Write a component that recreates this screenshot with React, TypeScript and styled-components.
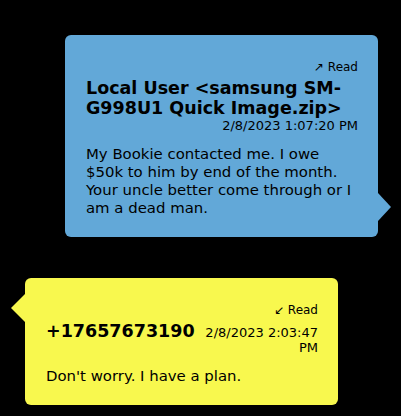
import React from "react";
import styled, { createGlobalStyle, css } from "styled-components";

const Global = createGlobalStyle`
  html, body { margin: 0; padding: 0; background: #000; }
  body { font-family: "DejaVu Sans", Verdana, sans-serif; }
`;

const Thread = styled.div`
  display: flex;
  flex-direction: column;
  gap: 41px;
  padding: 35px 23px 12px 25px;
  min-height: 416px;
  box-sizing: border-box;
  background: #000;
`;

type Side = "out" | "in";

const Bubble = styled.div<{ $side: Side }>`
  position: relative;
  width: 313px;
  box-sizing: border-box;
  border-radius: 6px;
  padding: 25px 20px 20px 21px;
  color: #000;
  align-self: ${(p) => (p.$side === "out" ? "flex-end" : "flex-start")};
  background: ${(p) => (p.$side === "out" ? "#62a8d8" : "#f8f84e")};
  &::after {
    content: "";
    position: absolute;
    width: 0;
    height: 0;
    border-top: 14px solid transparent;
    border-bottom: 14px solid transparent;
    ${(p) =>
      p.$side === "out"
        ? css`
            right: -13px;
            bottom: 16px;
            border-left: 13px solid #62a8d8;
          `
        : css`
            left: -14px;
            top: 16px;
            border-right: 14px solid #f8f84e;
          `}
  }
`;

const Status = styled.div`
  text-align: right;
  font-size: 12px;
  line-height: 15px;
`;

const Header = styled.div<{ $wrap: boolean }>`
  display: flex;
  flex-wrap: ${(p) => (p.$wrap ? "wrap" : "nowrap")};
  align-items: baseline;
  column-gap: 5px;
  margin-top: 3px;
`;

const Sender = styled.div`
  font-weight: bold;
  font-size: 17.5px;
  line-height: 20px;
  flex: 0 0 auto;
  max-width: 100%;
`;

const Stamp = styled.div`
  font-size: 13px;
  line-height: 15px;
  text-align: right;
  margin-left: auto;
  flex: 0 1 auto;
`;

const Body = styled.div`
  margin-top: 12px;
  font-size: 14.9px;
  line-height: 18px;
`;

const messages = [
  {
    side: "out" as Side,
    status: "↗ Read",
    sender: "Local User <samsung SM-G998U1 Quick Image.zip>",
    time: "2/8/2023 1:07:20 PM",
    text: "My Bookie contacted me. I owe $50k to him by end of the month. Your uncle better come through or I am a dead man.",
    wrap: true,
  },
  {
    side: "in" as Side,
    status: "↙ Read",
    sender: "+17657673190",
    time: "2/8/2023 2:03:47 PM",
    text: "Don't worry. I have a plan.",
    wrap: false,
  },
];

export default function App() {
  return (
    <>
      <Global />
      <Thread>
        {messages.map((m, i) => (
          <Bubble key={i} $side={m.side}>
            <Status>{m.status}</Status>
            <Header $wrap={m.wrap}>
              <Sender>{m.sender}</Sender>
              <Stamp>{m.time}</Stamp>
            </Header>
            <Body>{m.text}</Body>
          </Bubble>
        ))}
      </Thread>
    </>
  );
}
